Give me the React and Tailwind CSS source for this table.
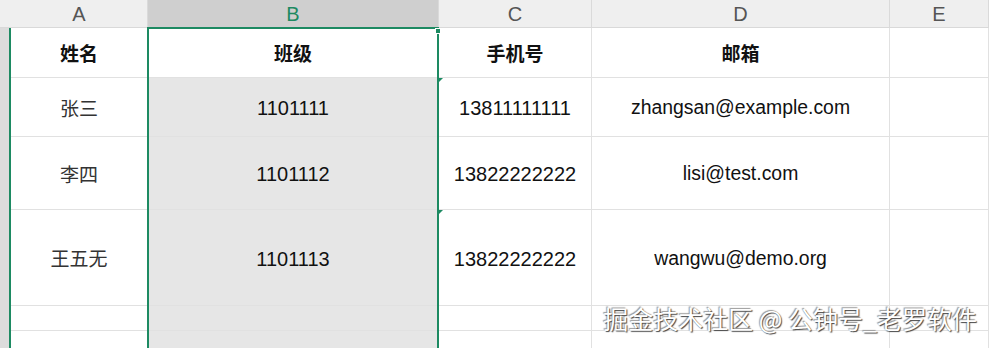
import React from 'react';

const cols = ['A', 'B', 'C', 'D', 'E'];

const rows = [
  { h: 'h-[50px]', head: true, cells: ['姓名', '班级', '手机号', '邮箱', ''] },
  { h: 'h-[59px]', cells: ['张三', '1101111', '13811111111', 'zhangsan@example.com', ''], mark: true },
  { h: 'h-[73px]', cells: ['李四', '1101112', '13822222222', 'lisi@test.com', ''] },
  { h: 'h-[96px]', cells: ['王五无', '1101113', '13822222222', 'wangwu@demo.org', ''], mark: true },
  { h: 'h-[25px]', cells: ['', '', '', '', ''] },
  { h: 'h-[25px]', cells: ['', '', '', '', ''] },
];

const widths = ['w-[137px]', 'w-[291px]', 'w-[153px]', 'w-[298px]', 'w-[99px]'];

const GREEN = 'border-[#1d8a62]';

const Cell = ({ text, col, head, mark }) => {
  const cjk = col === 0 || head;
  // 数字列字号略大
  const num = col === 1 || col === 2;
  return (
    <div
      className={`relative shrink-0 flex items-center justify-center pt-[2px] border-r border-b border-[#e1e1e1] ${widths[col]} ${
        col === 1 && !head ? 'bg-[#e6e6e6]' : 'bg-white'
      }`}
    >
      {mark && col === 2 && (
        <div className="absolute left-0 top-0 w-0 h-0 border-t-[4px] border-t-[#1d8a62] border-r-[4px] border-r-transparent" />
      )}
      <span
        className={
          cjk
            ? `text-[19px] ${head ? 'font-bold text-[#111]' : 'text-[#333]'} [font-family:'Noto_Sans_CJK_SC',sans-serif]`
            : `${num ? 'text-[20px]' : 'text-[19.4px]'} text-[#111] [font-family:'Liberation_Sans',Arial,sans-serif]`
        }
      >
        {text}
      </span>
    </div>
  );
};

export default function App() {
  return (
    <div className="relative w-[989px] h-[348px] overflow-hidden bg-white">
      {/* column headers */}
      <div className="flex h-[28px] bg-[#efefef] border-b border-[#d9d9d9]">
        <div className="w-[11px] shrink-0" />
        {cols.map((c, i) => (
          <div
            key={c}
            className={`shrink-0 flex items-center justify-center border-r border-[#dadada] text-[20px] [font-family:'Liberation_Sans',Arial,sans-serif] ${widths[i]} ${
              i === 1 ? 'bg-[#cfcfcf] text-[#1d8a62]' : 'text-[#555]'
            }`}
          >
            {c}
          </div>
        ))}
      </div>

      {/* body rows */}
      {rows.map((r, ri) => (
        <div key={ri} className={`flex ${r.h}`}>
          <div className={`w-[11px] shrink-0 bg-[#dcdcdc] border-r-2 ${GREEN}`} />
          {r.cells.map((t, ci) => (
            <Cell key={ci} text={t} col={ci} head={r.head} mark={r.mark} />
          ))}
        </div>
      ))}

      {/* column B selection */}
      <div className={`absolute left-[147px] top-[27px] w-[292px] h-[330px] border-2 ${GREEN} pointer-events-none`} />
      <div className="absolute left-[435px] top-[28px] w-[6px] h-[6px] bg-[#1d8a62] border border-white" />

      {/* watermark */}
      <div className="absolute right-[12px] top-[302px] text-[25px] leading-[32px] text-white whitespace-nowrap [font-family:'Noto_Sans_CJK_SC',sans-serif] [text-shadow:1px_1px_1px_#444,-1px_-1px_1px_#999]">
        掘金技术社区 @ 公钟号_老罗软件
      </div>
    </div>
  );
}
